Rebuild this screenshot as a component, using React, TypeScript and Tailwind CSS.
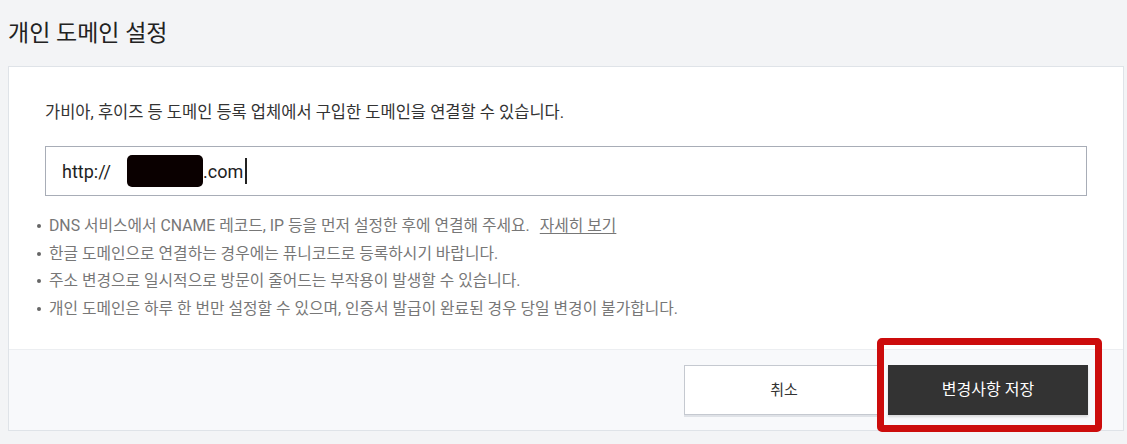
const NOTES = [
  '한글 도메인으로 연결하는 경우에는 퓨니코드로 등록하시기 바랍니다.',
  '주소 변경으로 일시적으로 방문이 줄어드는 부작용이 발생할 수 있습니다.',
  '개인 도메인은 하루 한 번만 설정할 수 있으며, 인증서 발급이 완료된 경우 당일 변경이 불가합니다.',
]

function Dot() {
  return <span className="w-[4px] h-[4px] rounded-full bg-[#666] shrink-0" />
}

export default function App() {
  return (
    <div
      className="relative min-h-screen bg-[#f3f4f6] pl-2 pr-[3px] pt-4 text-[#333]"
      style={{ fontFamily: 'Roboto, "Noto Sans CJK KR", sans-serif' }}
    >
      <h1 className="text-[23px] leading-[36px] font-normal text-[#222] mb-[14px]">개인 도메인 설정</h1>

      <div className="bg-white border border-[#dfe3e8]">
        {/* 본문 */}
        <div className="px-9 pt-[35px] pb-[26px]">
          <p className="text-[16.5px] leading-[22px] text-[#333]">
            가비아, 후이즈 등 도메인 등록 업체에서 구입한 도메인을 연결할 수 있습니다.
          </p>

          <div className="mt-[22px] h-[50px] border border-[#a8adb7] flex items-center pl-4 text-[18px] text-[#222]">
            <span>http://</span>
            <span className="ml-[16px] w-[76px] h-[32px] rounded-[5px] bg-[#0a0000]" />
            <span>.com</span>
            <span className="ml-[2px] w-[2px] h-[26px] bg-[#222]" />
          </div>

          <ul className="mt-4 -ml-[8px] text-[15.8px] leading-[27.7px] text-[#777]">
            <li className="flex items-center gap-[8px]">
              <Dot />
              <span>
                DNS 서비스에서 CNAME 레코드, IP 등을 먼저 설정한 후에 연결해 주세요.
                <a className="ml-[10px] underline underline-offset-2 text-[#777]" href="#">자세히 보기</a>
              </span>
            </li>
            {NOTES.map(n => (
              <li key={n} className="flex items-center gap-[8px]">
                <Dot />
                <span>{n}</span>
              </li>
            ))}
          </ul>
        </div>

        {/* 버튼 영역 */}
        <div className="bg-[#f8f9fb] border-t border-[#eceef1] h-[81px] flex items-center justify-end gap-1 pr-[35px]">
          <button className="w-[200px] h-[50px] bg-white border border-[#c5c9d0] shadow-[0_2px_0_#dfe2e7] text-[15px] text-[#333]">
            취소
          </button>
          <button className="w-[200px] h-[50px] bg-[#333] text-white text-[16px] shadow-[0_2px_2px_rgba(0,0,0,0.12)]">
            변경사항 저장
          </button>
        </div>
      </div>

      {/* 강조 표시 */}
      <div className="absolute left-[877px] top-[338px] w-[225px] h-[94px] border-[7px] border-[#cc0c0c] rounded-[5px] pointer-events-none" />
    </div>
  )
}
